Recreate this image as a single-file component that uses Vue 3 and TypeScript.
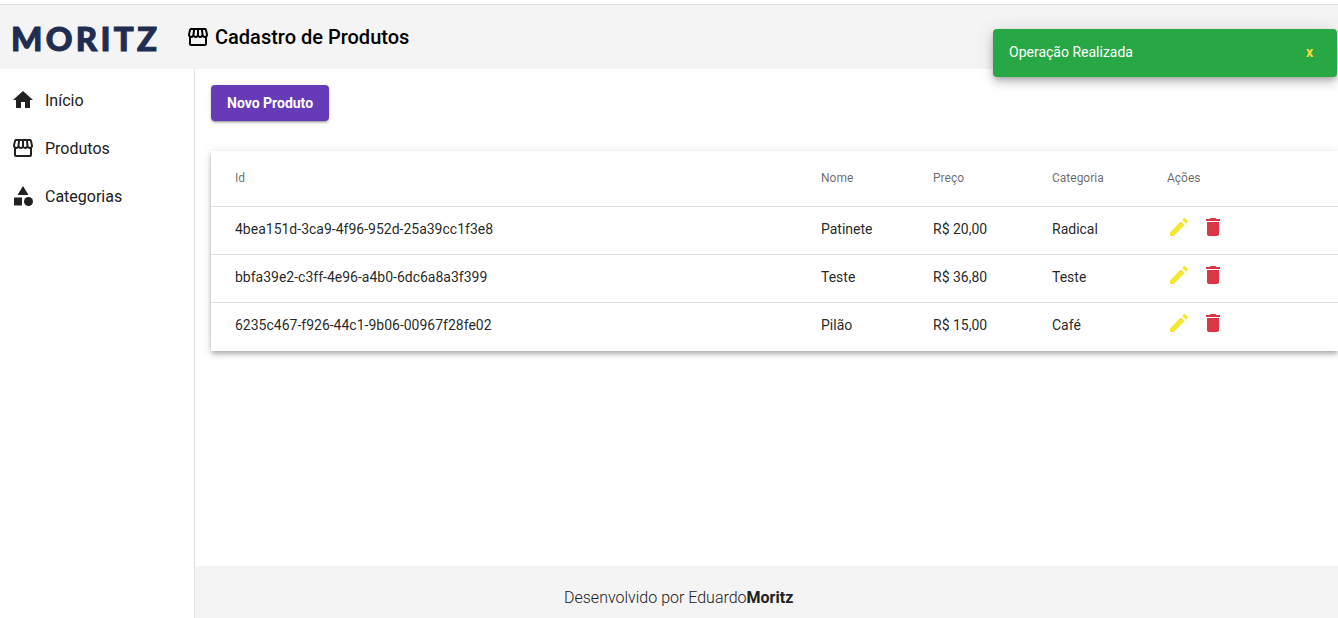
<script setup lang="ts">
const storePath = 'M21.9 8.89l-1.05-4.37c-.22-.9-1-1.52-1.91-1.52H5.05c-.9 0-1.69.63-1.9 1.52L2.1 8.89c-.24 1.02-.02 2.06.62 2.88.08.11.19.19.28.29V19c0 1.1.9 2 2 2h14c1.1 0 2-.9 2-2v-6.94c.09-.09.2-.18.28-.28.64-.82.87-1.87.62-2.89zm-2.99-3.9l1.05 4.37c.1.42.01.84-.25 1.17-.14.18-.44.47-.94.47-.61 0-1.14-.49-1.21-1.14L16.98 5l1.93-.01zM13 5h1.96l.54 4.52c.05.39-.07.78-.33 1.07-.22.26-.54.41-.95.41-.67 0-1.22-.59-1.22-1.31V5zM8.49 9.52L9.04 5H11v4.69c0 .72-.55 1.31-1.29 1.31-.34 0-.65-.15-.89-.41-.25-.29-.37-.68-.33-1.07zm-4.45-.16L5.05 5h1.97l-.58 4.86c-.08.65-.6 1.14-1.21 1.14-.49 0-.8-.29-.93-.47-.27-.32-.36-.75-.26-1.17zM5 19v-6.03c.08.01.15.03.23.03.87 0 1.66-.36 2.24-.95.6.6 1.4.95 2.31.95.87 0 1.65-.36 2.23-.93.59.57 1.39.93 2.29.93.84 0 1.64-.35 2.24-.95.58.59 1.37.95 2.24.95.08 0 .15-.02.23-.03V19H5z'

const menu = [
  { label: 'Início', paths: ['M10 20v-6h4v6h5v-8h3L12 3 2 12h3v8z'] },
  { label: 'Produtos', paths: [storePath] },
  { label: 'Categorias', paths: ['M12 2l-5.5 9h11z', 'M17.5 13a4.5 4.5 0 1 0 0 9 4.5 4.5 0 0 0 0-9z', 'M3 13.5h8v8H3z'] }
]

const produtos = [
  { id: '4bea151d-3ca9-4f96-952d-25a39cc1f3e8', nome: 'Patinete', preco: 'R$ 20,00', categoria: 'Radical' },
  { id: 'bbfa39e2-c3ff-4e96-a4b0-6dc6a8a3f399', nome: 'Teste', preco: 'R$ 36,80', categoria: 'Teste' },
  { id: '6235c467-f926-44c1-9b06-00967f28fe02', nome: 'Pilão', preco: 'R$ 15,00', categoria: 'Café' }
]
</script>

<template>
  <div class="page">
    <header class="header">
      <span class="logo">MORITZ</span>
      <h1 class="title">
        <svg class="icon" viewBox="0 0 24 24"><path :d="storePath" /></svg>
        Cadastro de Produtos
      </h1>
    </header>

    <div class="body">
      <nav class="sidebar">
        <a v-for="item in menu" :key="item.label" class="nav-item">
          <svg class="icon" viewBox="0 0 24 24"><path v-for="p in item.paths" :key="p" :d="p" /></svg>
          <span>{{ item.label }}</span>
        </a>
      </nav>

      <div class="main">
        <main class="content">
          <button class="btn-new">Novo Produto</button>
          <table class="table">
            <colgroup>
              <col class="col-id" />
              <col class="col-nome" />
              <col class="col-preco" />
              <col class="col-cat" />
              <col />
            </colgroup>
            <thead>
              <tr>
                <th>Id</th>
                <th>Nome</th>
                <th>Preço</th>
                <th>Categoria</th>
                <th>Ações</th>
              </tr>
            </thead>
            <tbody>
              <tr v-for="p in produtos" :key="p.id">
                <td>{{ p.id }}</td>
                <td>{{ p.nome }}</td>
                <td>{{ p.preco }}</td>
                <td>{{ p.categoria }}</td>
                <td>
                  <div class="actions">
                    <svg class="icon edit" viewBox="0 0 24 24">
                      <path d="M3 17.25V21h3.75L17.81 9.94l-3.75-3.75L3 17.25zM20.71 7.04c.39-.39.39-1.02 0-1.41l-2.34-2.34c-.39-.39-1.02-.39-1.41 0l-1.83 1.83 3.75 3.75 1.83-1.83z" />
                    </svg>
                    <svg class="icon trash" viewBox="0 0 24 24">
                      <path d="M6 19c0 1.1.9 2 2 2h8c1.1 0 2-.9 2-2V7H6v12zM19 4h-3.5l-1-1h-5l-1 1H5v2h14V4z" />
                    </svg>
                  </div>
                </td>
              </tr>
            </tbody>
          </table>
        </main>
        <footer class="footer">
          <span>Desenvolvido por Eduardo<strong>Moritz</strong></span>
        </footer>
      </div>
    </div>

    <div class="toast">
      <span>Operação Realizada</span>
      <span class="toast-close">x</span>
    </div>
  </div>
</template>

<style scoped>
.page {
  position: relative;
  display: flex;
  flex-direction: column;
  height: 618px;
  padding-top: 4px;
  box-sizing: border-box;
  overflow: hidden;
  font-family: Roboto, "Liberation Sans", sans-serif;
  color: #212121;
}

.icon {
  width: 24px;
  height: 24px;
  fill: currentColor;
  flex: none;
}

.header {
  display: flex;
  align-items: center;
  height: 65px;
  box-sizing: border-box;
  border-top: 1px solid #e0e0e0;
  background: #f4f4f4;
  padding-left: 11px;
}

.logo {
  width: 175px;
  margin-top: 2px;
  font-family: Lato, sans-serif;
  font-weight: 900;
  font-size: 33px;
  letter-spacing: 3.3px;
  color: #1f2d50;
  -webkit-text-stroke: 1px #1f2d50;
}

.title {
  display: flex;
  align-items: center;
  gap: 5px;
  margin: 0;
  font-size: 20px;
  font-weight: 500;
  color: #000;
}

.body {
  display: flex;
  flex: 1;
  min-height: 0;
}

.sidebar {
  width: 195px;
  box-sizing: border-box;
  border-right: 1px solid #e0e0e0;
  padding-top: 7px;
  flex: none;
}

.nav-item {
  display: flex;
  align-items: center;
  gap: 10px;
  height: 48px;
  padding-left: 11px;
  font-size: 16px;
  color: #212121;
}

.main {
  display: flex;
  flex-direction: column;
  flex: 1;
  min-width: 0;
}

.content {
  flex: 1;
  padding: 16px 0 0 16px;
}

.btn-new {
  display: block;
  height: 36px;
  padding: 0 16px;
  border: none;
  border-radius: 4px;
  background: #673ab7;
  color: #fff;
  font-family: inherit;
  font-size: 14px;
  font-weight: 700;
  box-shadow: 0 3px 1px -2px rgba(0, 0, 0, 0.2), 0 2px 2px 0 rgba(0, 0, 0, 0.14), 0 1px 5px 0 rgba(0, 0, 0, 0.12);
}

.table {
  width: 100%;
  margin-top: 30px;
  border-collapse: collapse;
  table-layout: fixed;
  background: #fff;
  box-shadow: 0 2px 4px -1px rgba(0, 0, 0, 0.2), 0 4px 5px 0 rgba(0, 0, 0, 0.14), 0 1px 10px 0 rgba(0, 0, 0, 0.12);
}

.col-id { width: 610px; }
.col-nome { width: 112px; }
.col-preco { width: 119px; }
.col-cat { width: 115px; }

.table th {
  height: 53px;
  padding: 0 0 2px;
  text-align: left;
  font-size: 12px;
  font-weight: 400;
  color: rgba(0, 0, 0, 0.6);
  border-bottom: 1px solid #e0e0e0;
}

.table th:first-child,
.table td:first-child {
  padding-left: 24px;
}

.table td {
  height: 43px;
  padding: 0 0 4px;
  font-size: 14px;
  color: rgba(0, 0, 0, 0.87);
  border-bottom: 1px solid #e0e0e0;
}

.table tbody tr:last-child td {
  border-bottom: none;
  height: 44px;
}

.actions {
  display: flex;
  gap: 10px;
  margin-bottom: 4px;
}

.edit { color: #f4e637; }
.trash { color: #dc3545; }

.footer {
  height: 52px;
  box-sizing: border-box;
  display: flex;
  align-items: center;
  padding: 10px 0 0 369px;
  background: #f4f4f4;
  font-size: 16px;
  font-weight: 300;
  color: #212121;
}

.footer strong {
  font-weight: 700;
}

.toast {
  position: absolute;
  top: 29px;
  left: 993px;
  width: 344px;
  height: 48px;
  box-sizing: border-box;
  display: flex;
  align-items: center;
  justify-content: space-between;
  padding: 0 24px 2px 16px;
  border-radius: 4px;
  background: #28a745;
  color: #fff;
  font-size: 14px;
  font-weight: 400;
  box-shadow: 0 3px 5px -1px rgba(0, 0, 0, 0.2), 0 6px 10px 0 rgba(0, 0, 0, 0.14), 0 1px 18px 0 rgba(0, 0, 0, 0.12);
}

.toast-close {
  color: #ffd740;
  font-weight: 700;
}
</style>
